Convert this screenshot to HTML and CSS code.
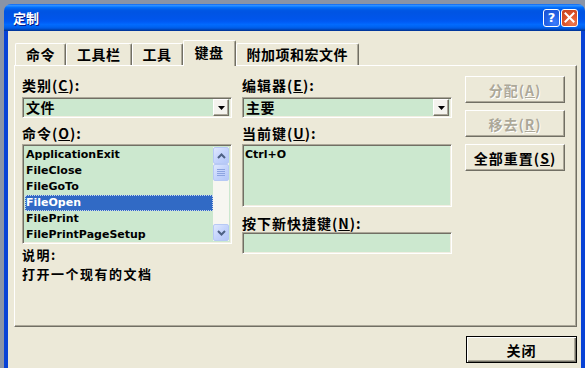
FILE: index.html
```html
<!DOCTYPE html>
<html lang="zh-CN">
<head>
<meta charset="utf-8">
<title>定制</title>
<link rel="stylesheet" href="styles.css">
</head>
<body>
<div class="window">
  <div class="titlebar">
    <span class="title">定制</span>
    <div class="tb-buttons">
      <span class="tb-btn tb-help">?</span>
      <span class="tb-btn tb-close">
        <svg width="11" height="11" viewBox="0 0 11 11"><path d="M1.5 1.5 L9.5 9.5 M9.5 1.5 L1.5 9.5" stroke="#fff" stroke-width="2" stroke-linecap="square"/></svg>
      </span>
    </div>
  </div>
  <div class="client">
    <div class="tabs">
      <div class="tab">命令</div>
      <div class="tab">工具栏</div>
      <div class="tab">工具</div>
      <div class="tab active">键盘</div>
      <div class="tab">附加项和宏文件</div>
    </div>
    <div class="panel">
      <div class="col col-left">
        <div class="lbl first">类别(<u>C</u>):</div>
        <div class="combo">
          <span class="combo-text">文件</span>
          <span class="combo-btn"><svg width="7" height="4" viewBox="0 0 7 4"><path d="M0 0 H7 L3.5 4 Z" fill="#000"/></svg></span>
        </div>
        <div class="lbl">命令(<u>O</u>):</div>
        <div class="listbox list-cmd">
          <div class="items">
            <div class="item">ApplicationExit</div>
            <div class="item">FileClose</div>
            <div class="item">FileGoTo</div>
            <div class="item selected">FileOpen</div>
            <div class="item">FilePrint</div>
            <div class="item">FilePrintPageSetup</div>
          </div>
          <div class="scrollbar">
            <div class="sb-btn">
              <svg width="9" height="6" viewBox="0 0 9 6"><path d="M1 5 L4.5 1.5 L8 5" fill="none" stroke="#4d6185" stroke-width="2"/></svg>
            </div>
            <div class="sb-thumb">
              <svg width="8" height="7" viewBox="0 0 8 7"><path d="M0 0.5 H8 M0 2.5 H8 M0 4.5 H8 M0 6.5 H8" stroke="#8ca4e0" stroke-width="1"/></svg>
            </div>
            <div class="sb-track"></div>
            <div class="sb-btn">
              <svg width="9" height="6" viewBox="0 0 9 6"><path d="M1 1 L4.5 4.5 L8 1" fill="none" stroke="#4d6185" stroke-width="2"/></svg>
            </div>
          </div>
        </div>
        <div class="desc desc-title">说明:</div>
        <div class="desc">打开一个现有的文档</div>
      </div>
      <div class="col col-mid">
        <div class="lbl first">编辑器(<u>E</u>):</div>
        <div class="combo">
          <span class="combo-text">主要</span>
          <span class="combo-btn"><svg width="7" height="4" viewBox="0 0 7 4"><path d="M0 0 H7 L3.5 4 Z" fill="#000"/></svg></span>
        </div>
        <div class="lbl">当前键(<u>U</u>):</div>
        <div class="listbox list-keys">
          <div class="items">
            <div class="item key">Ctrl+O</div>
          </div>
        </div>
        <div class="lbl lbl-new">按下新快捷键(<u>N</u>):</div>
        <div class="input"></div>
      </div>
      <div class="col col-right">
        <button class="btn disabled">分配(<u>A</u>)</button>
        <button class="btn disabled">移去(<u>R</u>)</button>
        <button class="btn">全部重置(<u>S</u>)</button>
      </div>
    </div>
    <div class="footer">
      <button class="btn default">关闭</button>
    </div>
  </div>
</div>
</body>
</html>
```

FILE: styles.css
```css
* { box-sizing: border-box; }
html, body { margin: 0; padding: 0; }
body {
  width: 585px;
  height: 368px;
  overflow: hidden;
  background: #8a94a6;
  font-family: "Noto Sans CJK SC", sans-serif;
  font-weight: 700;
  font-size: 14px;
  color: #000;
}
u { text-decoration: underline; text-underline-offset: 1px; }

.window {
  margin: 4px 0 0 4px;
  width: 581px;
  height: 364px;
  display: flex;
  flex-direction: column;
}

.titlebar {
  flex: none;
  height: 27px;
  border-radius: 7px 7px 0 0;
  background: linear-gradient(to bottom,
    #0058ee 0%, #3593ff 4%, #288eff 7%, #127dff 10%, #036ffc 13%,
    #0262ee 18%, #0057e5 24%, #0054e3 30%, #0055eb 56%, #005bf5 66%,
    #026afe 76%, #0062ef 86%, #0052d6 92%, #0040ab 96%, #003092 100%);
  display: flex;
  align-items: center;
  justify-content: space-between;
  padding: 0 7px 0 9px;
}
.title {
  color: #fff;
  font-size: 13px;
  line-height: 16px;
  text-shadow: 1px 1px #0a1883;
}
.tb-buttons { display: flex; gap: 1px; }
.tb-btn {
  width: 17px;
  height: 18px;
  border: 1px solid #fff;
  border-radius: 3px;
  display: flex;
  align-items: center;
  justify-content: center;
}
.tb-help {
  background: radial-gradient(circle at 70% 80%, #3c7dfc 0%, #2463e8 45%, #1a4fd0 100%);
  color: #fff;
  font-family: "DejaVu Sans", sans-serif;
  font-size: 13px;
  line-height: 16px;
}
.tb-close {
  background: radial-gradient(circle at 70% 80%, #f07c52 0%, #e0552c 45%, #c2401d 100%);
}

.client {
  flex: 1;
  background: #ece9d8;
  border-left: 4px solid #0842d6;
  border-right: 4px solid #0842d6;
  display: flex;
  flex-direction: column;
  padding: 0 4px 0 6px;
}

.tabs {
  flex: none;
  height: 34px;
  padding-top: 9px;
  margin-left: 1px;
  display: flex;
  align-items: flex-end;
  position: relative;
  z-index: 1;
}
.tab {
  height: 22px;
  padding: 0 10px;
  line-height: 20px;
  letter-spacing: 0.5px;
  background: #ece9d8;
  border-top: 1px solid #fff;
  border-left: 1px solid #fff;
  border-right: 1px solid #716f64;
  box-shadow: inset -1px 0 #aca899;
  border-radius: 2px 2px 0 0;
  white-space: nowrap;
}
.tab.active {
  height: 26px;
  margin-bottom: -1px;
  padding: 0 11px;
  line-height: 22px;
}

.panel {
  flex: none;
  height: 262px;
  border: 1px solid;
  border-color: #fff #716f64 #716f64 #fff;
  box-shadow: inset -1px -1px #aca899;
  display: flex;
  padding: 10px 0 0 7px;
}
.col { display: flex; flex-direction: column; }
.col-left { width: 210px; margin-right: 10px; }
.col-mid { width: 210px; margin-right: 13px; }
.col-right { width: 100px; gap: 7px; }

.lbl {
  height: 16px;
  line-height: 16px;
  letter-spacing: 1px;
  margin-top: 7px;
  white-space: nowrap;
}
.lbl.first { margin-top: 1px; }
.lbl.lbl-new { margin-top: 8px; }

.combo, .listbox, .input {
  background: #cce8cf;
  border: 1px solid;
  border-color: #aca899 #fff #fff #aca899;
  box-shadow: inset 1px 1px #716f64, inset -1px -1px #f1efe2;
}
.combo {
  margin-top: 4px;
  height: 21px;
  padding: 2px;
  display: flex;
  align-items: center;
}
.combo-text {
  flex: 1;
  padding-left: 1px;
  line-height: 17px;
  letter-spacing: 0.5px;
}
.combo-btn {
  width: 16px;
  height: 17px;
  background: #f4f3ee;
  border: 1px solid;
  border-color: #fff #716f64 #716f64 #fff;
  box-shadow: inset -1px -1px #aca899;
  display: flex;
  align-items: center;
  justify-content: center;
}

.listbox {
  margin-top: 3px;
  padding: 2px;
  display: flex;
}
.list-cmd { height: 100px; }
.list-keys { height: 63px; }
.items { flex: 1; min-width: 0; }
.item {
  height: 16px;
  line-height: 16px;
  padding-left: 1px;
  font-family: "DejaVu Sans", sans-serif;
  font-size: 11px;
  font-weight: 700;
  white-space: nowrap;
  overflow: hidden;
}
.item.selected {
  background: #316ac5;
  color: #fff;
  outline: 1px dotted #c9d6ee;
  outline-offset: -1px;
}
.item.key { padding-left: 0; }

.scrollbar {
  width: 16px;
  display: flex;
  flex-direction: column;
  background: #f7f6f1;
}
.sb-btn, .sb-thumb {
  height: 17px;
  flex: none;
  border: 1px solid #b7c9f5;
  border-radius: 2px;
  background: linear-gradient(135deg, #dfe8fe 0%, #c5d4fc 50%, #b4c7f8 100%);
  display: flex;
  align-items: center;
  justify-content: center;
}
.sb-track { flex: 1; }

.input {
  margin-top: 1px;
  height: 22px;
}

.btn {
  margin: 0;
  padding: 0;
  width: 100px;
  height: 27px;
  font: inherit;
  color: #000;
  letter-spacing: 1px;
  background: #ece9d8;
  border: 1px solid;
  border-color: #fff #716f64 #716f64 #fff;
  box-shadow: inset -1px -1px #aca899;
  display: flex;
  align-items: center;
  justify-content: center;
}
.btn.disabled {
  color: #aca899;
  text-shadow: 1px 1px #fff;
}
.btn.default {
  width: 111px;
  border: 1px solid #000;
  box-shadow: inset 1px 1px #fff, inset -1px -1px #716f64, inset -2px -2px #aca899;
}

.desc {
  font-size: 13px;
  line-height: 19px;
  letter-spacing: 1.5px;
  white-space: nowrap;
}
.desc-title { margin-top: 1px; }

.footer {
  display: flex;
  justify-content: flex-end;
  padding-top: 9px;
}
```
